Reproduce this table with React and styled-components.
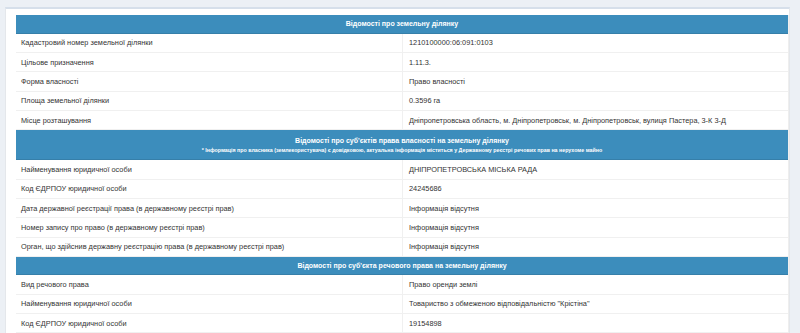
import styled, { createGlobalStyle } from "styled-components";

const Global = createGlobalStyle`
  body {
    margin: 0;
    background: #ecf0f5;
    font-family: "Liberation Sans", Arial, sans-serif;
  }
`

const sections = [
  {
    title: "Відомості про земельну ділянку",
    rows: [
      ["Кадастровий номер земельної ділянки", "1210100000:06:091:0103"],
      ["Цільове призначення", "1.11.3."],
      ["Форма власності", "Право власності"],
      ["Площа земельної ділянки", "0.3596 га"],
      ["Місце розташування", "Дніпропетровська область, м. Дніпропетровськ, м. Дніпропетровськ, вулиця Пастера, 3-К 3-Д"],
    ],
  },
  {
    title: "Відомості про суб'єктів права власності на земельну ділянку",
    note: "* Інформація про власника (землекористувача) є довідковою, актуальна інформація міститься у Державному реєстрі речових прав на нерухоме майно",
    rows: [
      ["Найменування юридичної особи", "ДНІПРОПЕТРОВСЬКА МІСЬКА РАДА"],
      ["Код ЄДРПОУ юридичної особи", "24245686"],
      ["Дата державної реєстрації права (в державному реєстрі прав)", "Інформація відсутня"],
      ["Номер запису про право (в державному реєстрі прав)", "Інформація відсутня"],
      ["Орган, що здійснив державну реєстрацію права (в державному реєстрі прав)", "Інформація відсутня"],
    ],
  },
  {
    title: "Відомості про суб'єкта речового права на земельну ділянку",
    rows: [
      ["Вид речового права", "Право оренди землі"],
      ["Найменування юридичної особи", "Товариство з обмеженою відповідальністю \"Крістіна\""],
      ["Код ЄДРПОУ юридичної особи", "19154898"],
    ],
  },
]

const Box = styled.div`
  margin: 7px 10px 0 5px;
  background: #fff;
  border-top: 2px solid #d6dfea;
  border-left: 1px solid #e4e7eb;
  border-right: 1px solid #e4e7eb;
  padding: 6px 2px 0 10px;
  height: 330px;
  box-sizing: border-box;
`

const Table = styled.div`
  width: 772px;
  border-right: 1px solid #eeeeee;
`

const Header = styled.div`
  background: #3c8dbc;
  color: #fff;
  font-weight: bold;
  text-align: center;
  display: flex;
  flex-direction: column;
  justify-content: center;
  height: ${p => (p.$tall ? "30px" : "18.5px")};
  border-bottom: 1px solid #367fa9;
  box-sizing: border-box;
`

const Title = styled.div`
  font-size: 7px;
  line-height: 11px;
`

const Note = styled.div`
  font-size: 5.3px;
  line-height: 8px;
`

const Row = styled.div`
  display: grid;
  grid-template-columns: 386px 1fr;
  height: 19.35px;
  border-bottom: 1px solid #f0f0f0;
  box-sizing: border-box;
  font-size: 7.35px;
  color: #333;
`

const Cell = styled.div`
  display: flex;
  align-items: center;
  padding-left: ${p => (p.$value ? "6px" : "5px")};
  border-left: ${p => (p.$value ? "1px solid #f0f0f0" : "none")};
  white-space: nowrap;
`

export default function App() {
  return (
    <>
      <Global />
      <Box>
        <Table>
          {sections.map(s => (
            <div key={s.title}>
              <Header $tall={!!s.note}>
                <Title>{s.title}</Title>
                {s.note && <Note>{s.note}</Note>}
              </Header>
              {s.rows.map(([label, value]) => (
                <Row key={label}>
                  <Cell>{label}</Cell>
                  <Cell $value>{value}</Cell>
                </Row>
              ))}
            </div>
          ))}
        </Table>
      </Box>
    </>
  )
}
